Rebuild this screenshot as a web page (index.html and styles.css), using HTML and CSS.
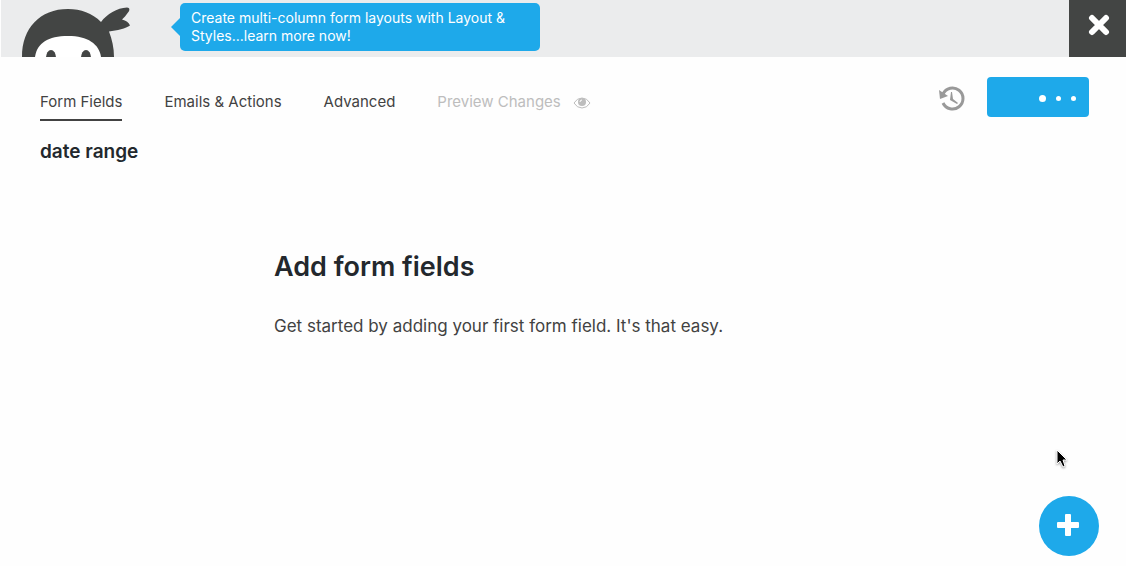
FILE: index.html
```html
<!DOCTYPE html>
<html lang="en">
<head>
<meta charset="utf-8">
<meta name="viewport" content="width=device-width, initial-scale=1">
<title>date range</title>
<link rel="stylesheet" href="styles.css">
</head>
<body>
<header class="topbar">
  <svg class="ninja" viewBox="0 0 110 50" aria-hidden="true">
    <path class="ninja-hood" d="M0 50C0 21 18 2 46 2c13 0 24 4 33 13C85 7 95 1 105 0.500c3 0 3 3 1 5c-2 3-4 5-6 7c4 1 7 3 8 6c-4 3-13 5-21 6c3 8 5 16 5 25.500z"/>
    <path class="ninja-face" d="M13 50C15 36 26 29 46 29s31 8 33 21z"/>
    <ellipse class="ninja-hood" cx="29" cy="51" rx="5" ry="8"/>
    <ellipse class="ninja-hood" cx="64" cy="51" rx="5" ry="8"/>
  </svg>
  <a class="notice" href="#">Create multi-column form layouts with Layout &amp; Styles...learn more now!</a>
  <button class="close" type="button" aria-label="Close">
    <svg width="22" height="22" viewBox="0 0 22 22" aria-hidden="true"><path d="M4 4L18 18M18 4L4 18"/></svg>
  </button>
</header>
<div class="toolbar">
  <nav class="tabs">
    <a class="tab tab-active" href="#">Form Fields</a>
    <a class="tab" href="#">Emails &amp; Actions</a>
    <a class="tab" href="#">Advanced</a>
    <a class="tab tab-muted" href="#">Preview Changes
      <svg class="eye" width="18" height="14" viewBox="0 0 18 14" aria-hidden="true"><path class="eye-line" d="M1 8Q4 3 9 3t8 5Q14 13 9 13T1 8z"/><circle cx="9" cy="7" r="4"/><path class="eye-glint" d="M7 7Q7 5 9 5"/></svg>
    </a>
  </nav>
  <div class="actions">
    <button class="history" type="button" aria-label="Undo history">
      <svg width="26" height="26" viewBox="0 0 26 26" aria-hidden="true"><path class="history-ring" d="M4 8A10.500 10.500 0 1 1 4 17"/><path d="M0 4L1 13L9 10z"/><path d="M12 6h1l1 7l5 4l-1 1l-7-4z"/></svg>
    </button>
    <button class="publish" type="button" aria-label="Publishing">
      <span class="dot dot-large"></span><span class="dot"></span><span class="dot"></span>
    </button>
  </div>
</div>
<main class="builder">
  <h1 class="form-title">date range</h1>
  <section class="empty">
    <h2 class="empty-title">Add form fields</h2>
    <p class="empty-text">Get started by adding your first form field. It's that easy.</p>
  </section>
</main>
<button class="add" type="button" aria-label="Add new field">
  <svg width="22" height="22" viewBox="0 0 22 22" aria-hidden="true"><path d="M9 0h4q1 0 1 1v7h7q1 0 1 1v4q0 1-1 1h-7v7q0 1-1 1H9q-1 0-1-1v-7H1q-1 0-1-1V9q0-1 1-1h7V1q0-1 1-1z"/></svg>
</button>
<svg class="pointer" width="14" height="20" viewBox="0 0 14 20" aria-hidden="true"><path d="M2 1v14l3-3l3 6l2-1l-2-6h4z"/></svg>
</body>
</html>
```
FILE: styles.css
```css
* { box-sizing: border-box; }
body {
  margin: 0;
  min-height: 100vh;
  background: #fefefe;
  color: #424242;
  font-family: Inter, "Liberation Sans", sans-serif;
  font-size: 15px;
}
button { border: 0; padding: 0; background: none; cursor: pointer; }
a { color: inherit; text-decoration: none; }
svg { display: block; }
.topbar {
  display: flex;
  align-items: flex-end;
  height: 57px;
  margin-left: 1px;
  padding-left: 21px;
  background: #ebeced;
}
.ninja { width: 110px; height: 50px; flex: none; }
.ninja-hood { fill: #434544; }
.ninja-face { fill: #fff; }
.notice {
  position: relative;
  align-self: flex-start;
  width: 360px;
  margin: 3px 20px 0 48px;
  padding: 6px 11px;
  border-radius: 5px;
  background: #1ea9ea;
  color: #fff;
  font-size: 14px;
  line-height: 18px;
}
.notice::before {
  content: "";
  position: absolute;
  left: -9px;
  top: 15px;
  border: solid transparent;
  border-width: 9px 9px 9px 0;
  border-right-color: #1ea9ea;
}
.close {
  display: grid;
  place-items: center;
  align-self: stretch;
  flex: none;
  width: 57px;
  margin-left: auto;
  padding: 0 0 7px 3px;
  background: #434544;
}
.close path { stroke: #fff; stroke-width: 6; stroke-linecap: round; }
.toolbar {
  display: flex;
  justify-content: space-between;
  align-items: flex-start;
  padding: 20px 37px 0 40px;
}
.tabs { display: flex; gap: 42px; padding-top: 14px; }
.tab {
  display: flex;
  align-items: center;
  gap: 12px;
  height: 30px;
  padding-bottom: 6px;
  border-bottom: 2px solid transparent;
  line-height: 22px;
  white-space: nowrap;
}
.tab-active { border-color: #424242; }
.tab-muted { color: #bdbdbd; }
.eye { fill: #bdbdbd; }
.eye-line { fill: none; stroke: #bdbdbd; stroke-width: 1; }
.eye-glint { fill: none; stroke: #fff; stroke-width: 1; }
.actions { display: flex; align-items: center; gap: 22px; }
.history svg { fill: #999; margin-top: 4px; }
.history .history-ring { fill: none; stroke: #999; stroke-width: 3; }
.publish {
  display: flex;
  justify-content: flex-end;
  align-items: center;
  gap: 10px;
  width: 102px;
  height: 40px;
  padding: 2px 13px 0 0;
  border-radius: 4px;
  background: #1ea9ea;
}
.dot { width: 5px; height: 5px; border-radius: 50%; background: #fff; }
.dot-large { width: 7px; height: 7px; }
.builder { padding: 14px 40px 40px; }
.form-title {
  margin: 0;
  color: #23282d;
  font-size: 19px;
  font-weight: 600;
  line-height: 34px;
}
.empty { max-width: 578px; margin: 78px auto 0; }
.empty-title {
  margin: 0;
  color: #23282d;
  font-size: 27px;
  font-weight: 600;
  line-height: 40px;
}
.empty-text { margin: 25px 0 0; font-size: 17px; line-height: 28px; }
.add {
  position: fixed;
  right: 27px;
  bottom: 10px;
  display: grid;
  place-items: center;
  width: 60px;
  height: 60px;
  padding: 0 2px 2px 0;
  border-radius: 50%;
  background: #1ea9ea;
}
.add svg { fill: #fff; }
.pointer {
  position: fixed;
  right: 57px;
  bottom: 97px;
  fill: #000;
  stroke: #fff;
  stroke-width: 1;
  filter: drop-shadow(0 1px 1px #0006);
  pointer-events: none;
}
```
